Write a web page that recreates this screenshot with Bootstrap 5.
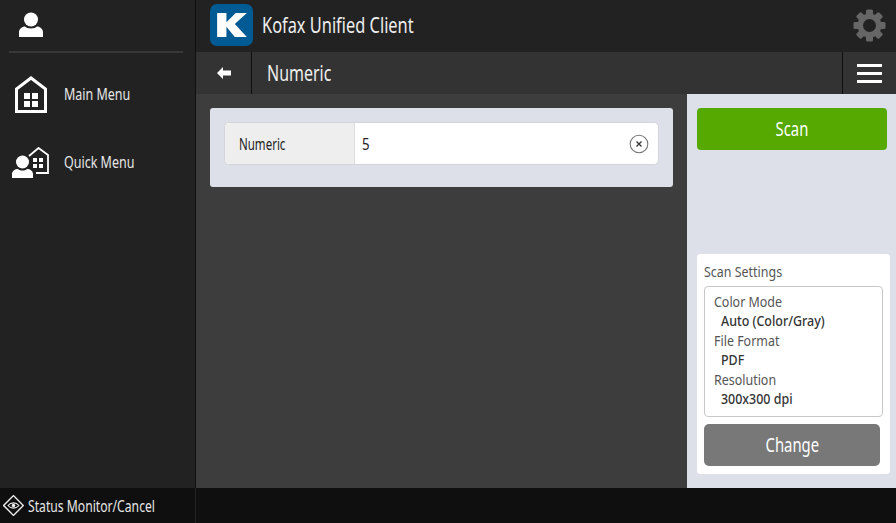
<!DOCTYPE html>
<html lang="en">
<head>
<meta charset="UTF-8">
<title>Kofax Unified Client</title>
<link rel="stylesheet" href="https://cdn.jsdelivr.net/npm/bootstrap@5.3.0/dist/css/bootstrap.min.css">
<style>
html, body { height: 100%; }
body { font-family: "Noto Sans", "Liberation Sans", sans-serif; background: #0f0f0f; overflow: hidden; }
.shell { width: 896px; height: 523px; }
.upper { height: 488px; }
/* the original font is a condensed one, none installed so squeeze Noto Sans */
.sq { display: inline-block; white-space: nowrap; transform-origin: 0 50%; transform: scaleX(.78); }
.sq-mid { transform-origin: 50% 50%; transform: scaleX(.78); }
.side-col { width: 196px; background: #222; border-right: 1px solid #0f0f0f; color: #e6e6e6; }
.user-row { height: 53px; margin: 0 12px 0 9px; border-bottom: 2px solid #383838; padding: 0 0 3px 10px; }
.menu-row { height: 68px; font-size: 16px; }
.menu-first { margin-top: 7px; }
.menu-ico { width: 64px; flex-shrink: 0; }
.main-col { width: 700px; }
.top-bar { height: 52px; background: #222; color: #eee; font-size: 21px; padding: 0 0 2px 14px; }
.top-bar .sq { transform: scaleX(.78); padding-top: 1px; }
.logo-box { width: 43px; height: 42px; background: #005a94; border-radius: 7px; margin-right: 9px; }
.gear { margin-left: auto; margin-right: 10px; }
.sub-bar { height: 42px; background: #333; color: #eee; font-size: 21px; }
.back-cell { width: 56px; border-right: 1px solid #0f0f0f; }
.title-cell { padding: 2px 0 0 15px; }
.title-cell .sq { transform: scaleX(.76); }
.menu-cell { width: 54px; border-left: 1px solid #0f0f0f; margin-left: auto; }
.burger { width: 25px; height: 19px; border-top: 3px solid #fff; border-bottom: 3px solid #fff; position: relative; }
.burger::after { content: ""; position: absolute; left: 0; right: 0; top: 5px; height: 3px; background: #fff; }
.body-row { height: 394px; }
.work { width: 491px; background: #3d3d3d; padding: 14px 14px; }
.field-panel { height: 79px; background: #dde0e8; border-radius: 3px; padding: 14px 14px; }
.field-row { height: 43px; border-radius: 5px; background: #fff; border: 1px solid #d3d5da; font-size: 16px; color: #222; }
.field-label { width: 130px; background: #eeeeee; padding-left: 14px; border-right: 1px solid #ddd; border-radius: 5px 0 0 5px; }
.field-label .sq { transform: scaleX(.72); }
.field-value { padding: 0 9px 0 7px; font-size: 17px; }
.right-col { width: 209px; background: #dde0e8; padding: 14px 9px 14px 10px; }
.scan-btn { height: 42px; width: 190px; background: #55a900; color: #fff; font-size: 19px; border: 0; border-radius: 4px; }
.scan-btn:hover { background: #55a900; color: #fff; }
.settings { background: #fff; border-radius: 3px; margin-top: auto; margin-right: -1px; height: 220px; width: 193px; padding: 8px 7px; color: #555; font-size: 15px; line-height: 19.500px; }
.settings .sq { transform: scaleX(.83); }
.settings-box { border: 1px solid #c8c8c8; border-radius: 4px; height: 131px; margin-top: 4px; padding: 5px 9px; }
.settings-val { padding-left: 7px; color: #333; font-weight: 500; }
.change-btn { height: 42px; width: 176px; margin-top: 7px; padding-top: 7px; background: #787878; color: #fff; font-size: 19px; border: 0; border-radius: 5px; line-height: 28px; }
.change-btn:hover { background: #787878; color: #fff; }
.settings .change-btn .sq { transform: scaleX(.78); }
.foot { height: 35px; background: #0f0f0f; color: #e6e6e6; font-size: 16px; }
.foot-left { width: 196px; border-right: 1px solid #222; padding-left: 3px; gap: 4px; }
.foot-left .sq { transform: scaleX(.76); }
</style>
</head>
<body>
<div class="shell d-flex flex-column">
  <div class="upper d-flex">
    <div class="side-col flex-shrink-0">
      <div class="user-row d-flex align-items-center">
        <svg width="24" height="25" viewBox="0 0 24 25"><circle cx="12" cy="7.500" r="7" fill="#fff"/><path d="M0 25v-5c0-3 3-5.500 6-5.500 2 2.500 10 2.500 12 0 3 0 6 2.500 6 5.500v5z" fill="#fff"/></svg>
      </div>
      <div class="menu-row menu-first d-flex align-items-center">
        <div class="menu-ico ps-3">
          <svg class="d-block" style="margin-left:-1px" width="32" height="37" viewBox="0 0 32 37"><path d="M1.500 35.500V13L16 2l14.500 11v22.500z" fill="none" stroke="#fff" stroke-width="3"/><rect x="9" y="17" width="6" height="6" fill="#fff"/><rect x="17" y="17" width="6" height="6" fill="#fff"/><rect x="9" y="25" width="6" height="6" fill="#fff"/><rect x="17" y="25" width="6" height="6" fill="#fff"/></svg>
        </div>
        <span class="sq">Main Menu</span>
      </div>
      <div class="menu-row d-flex align-items-center">
        <div class="menu-ico ps-2">
          <svg class="d-block" style="margin-left:4px" width="37" height="31" viewBox="0 0 37 31"><path d="M17 9l9.500-8 9.500 7v18H24" fill="none" stroke="#fff" stroke-width="1.800"/><rect x="21" y="11" width="4" height="4" fill="#fff"/><rect x="27" y="11" width="4" height="4" fill="#fff"/><rect x="21" y="17" width="4" height="4" fill="#fff"/><rect x="27" y="17" width="4" height="4" fill="#fff"/><circle cx="10.500" cy="15" r="6.500" fill="#fff"/><path d="M0 31v-4c0-3 3-5 6-5 2 2 7 2 9 0 3 0 6 2 6 5v4z" fill="#fff"/></svg>
        </div>
        <span class="sq">Quick Menu</span>
      </div>
    </div>
    <div class="main-col d-flex flex-column">
      <div class="top-bar d-flex align-items-center">
        <div class="logo-box d-flex align-items-center justify-content-center">
          <svg width="32" height="26" viewBox="0 0 34 28"><path d="M1 1h10v10L21 1h12L20 13l13 14H20L11 16v11H1z" fill="#fff"/></svg>
        </div>
        <span class="sq">Kofax Unified Client</span>
        <svg class="gear" width="33" height="33" viewBox="0 0 33 33"><g fill="#666"><circle cx="16.500" cy="16.500" r="12"/><rect x="13" y="0.500" width="7" height="7" rx="1.500"/><rect x="13" y="25.500" width="7" height="7" rx="1.500"/><rect x="13" y="0.500" width="7" height="7" rx="1.500" transform="rotate(45 16.500 16.500)"/><rect x="13" y="25.500" width="7" height="7" rx="1.500" transform="rotate(45 16.500 16.500)"/><rect x="13" y="0.500" width="7" height="7" rx="1.500" transform="rotate(90 16.500 16.500)"/><rect x="13" y="25.500" width="7" height="7" rx="1.500" transform="rotate(90 16.500 16.500)"/><rect x="13" y="0.500" width="7" height="7" rx="1.500" transform="rotate(135 16.500 16.500)"/><rect x="13" y="25.500" width="7" height="7" rx="1.500" transform="rotate(135 16.500 16.500)"/></g><circle cx="16.500" cy="16.500" r="6.500" fill="#222"/></svg>
      </div>
      <div class="sub-bar d-flex align-items-center">
        <div class="back-cell h-100 d-flex align-items-center justify-content-center">
          <svg width="14" height="12" viewBox="0 0 14 12"><path d="M0 6l6-6v3.500h8v5H6V12z" fill="#fff"/></svg>
        </div>
        <div class="title-cell"><span class="sq">Numeric</span></div>
        <div class="menu-cell h-100 d-flex align-items-center justify-content-center"><div class="burger"></div></div>
      </div>
      <div class="body-row d-flex">
        <div class="work">
          <div class="field-panel">
            <div class="field-row d-flex">
              <div class="field-label d-flex align-items-center"><span class="sq">Numeric</span></div>
              <div class="field-value flex-grow-1 d-flex align-items-center justify-content-between">
                <span class="sq">5</span>
                <svg width="20" height="20" viewBox="0 0 20 20"><circle cx="10" cy="10" r="8.800" fill="none" stroke="#777" stroke-width="1.100"/><path d="M7.500 7.500l5 5M12.500 7.500l-5 5" stroke="#333" stroke-width="1.300"/></svg>
              </div>
            </div>
          </div>
        </div>
        <div class="right-col d-flex flex-column">
          <button class="btn scan-btn"><span class="sq sq-mid">Scan</span></button>
          <div class="settings">
            <div><span class="sq">Scan Settings</span></div>
            <div class="settings-box">
              <div><span class="sq">Color Mode</span></div>
              <div class="settings-val"><span class="sq">Auto (Color/Gray)</span></div>
              <div><span class="sq">File Format</span></div>
              <div class="settings-val"><span class="sq">PDF</span></div>
              <div><span class="sq">Resolution</span></div>
              <div class="settings-val"><span class="sq">300x300 dpi</span></div>
            </div>
            <button class="btn change-btn d-block"><span class="sq sq-mid">Change</span></button>
          </div>
        </div>
      </div>
    </div>
  </div>
  <div class="foot d-flex">
    <div class="foot-left d-flex align-items-center">
      <svg width="21" height="21" viewBox="0 0 21 21"><rect x="3.500" y="3.500" width="14" height="14" transform="rotate(45 10.500 10.500)" fill="none" stroke="#eee" stroke-width="1.400"/><path d="M5 10.500c3-3.500 8-3.500 11 0-3 3.500-8 3.500-11 0z" fill="none" stroke="#eee" stroke-width="1.100"/><circle cx="10.500" cy="10.500" r="1.800" fill="#eee"/></svg>
      <span class="sq">Status Monitor/Cancel</span>
    </div>
  </div>
</div>
</body>
</html>
